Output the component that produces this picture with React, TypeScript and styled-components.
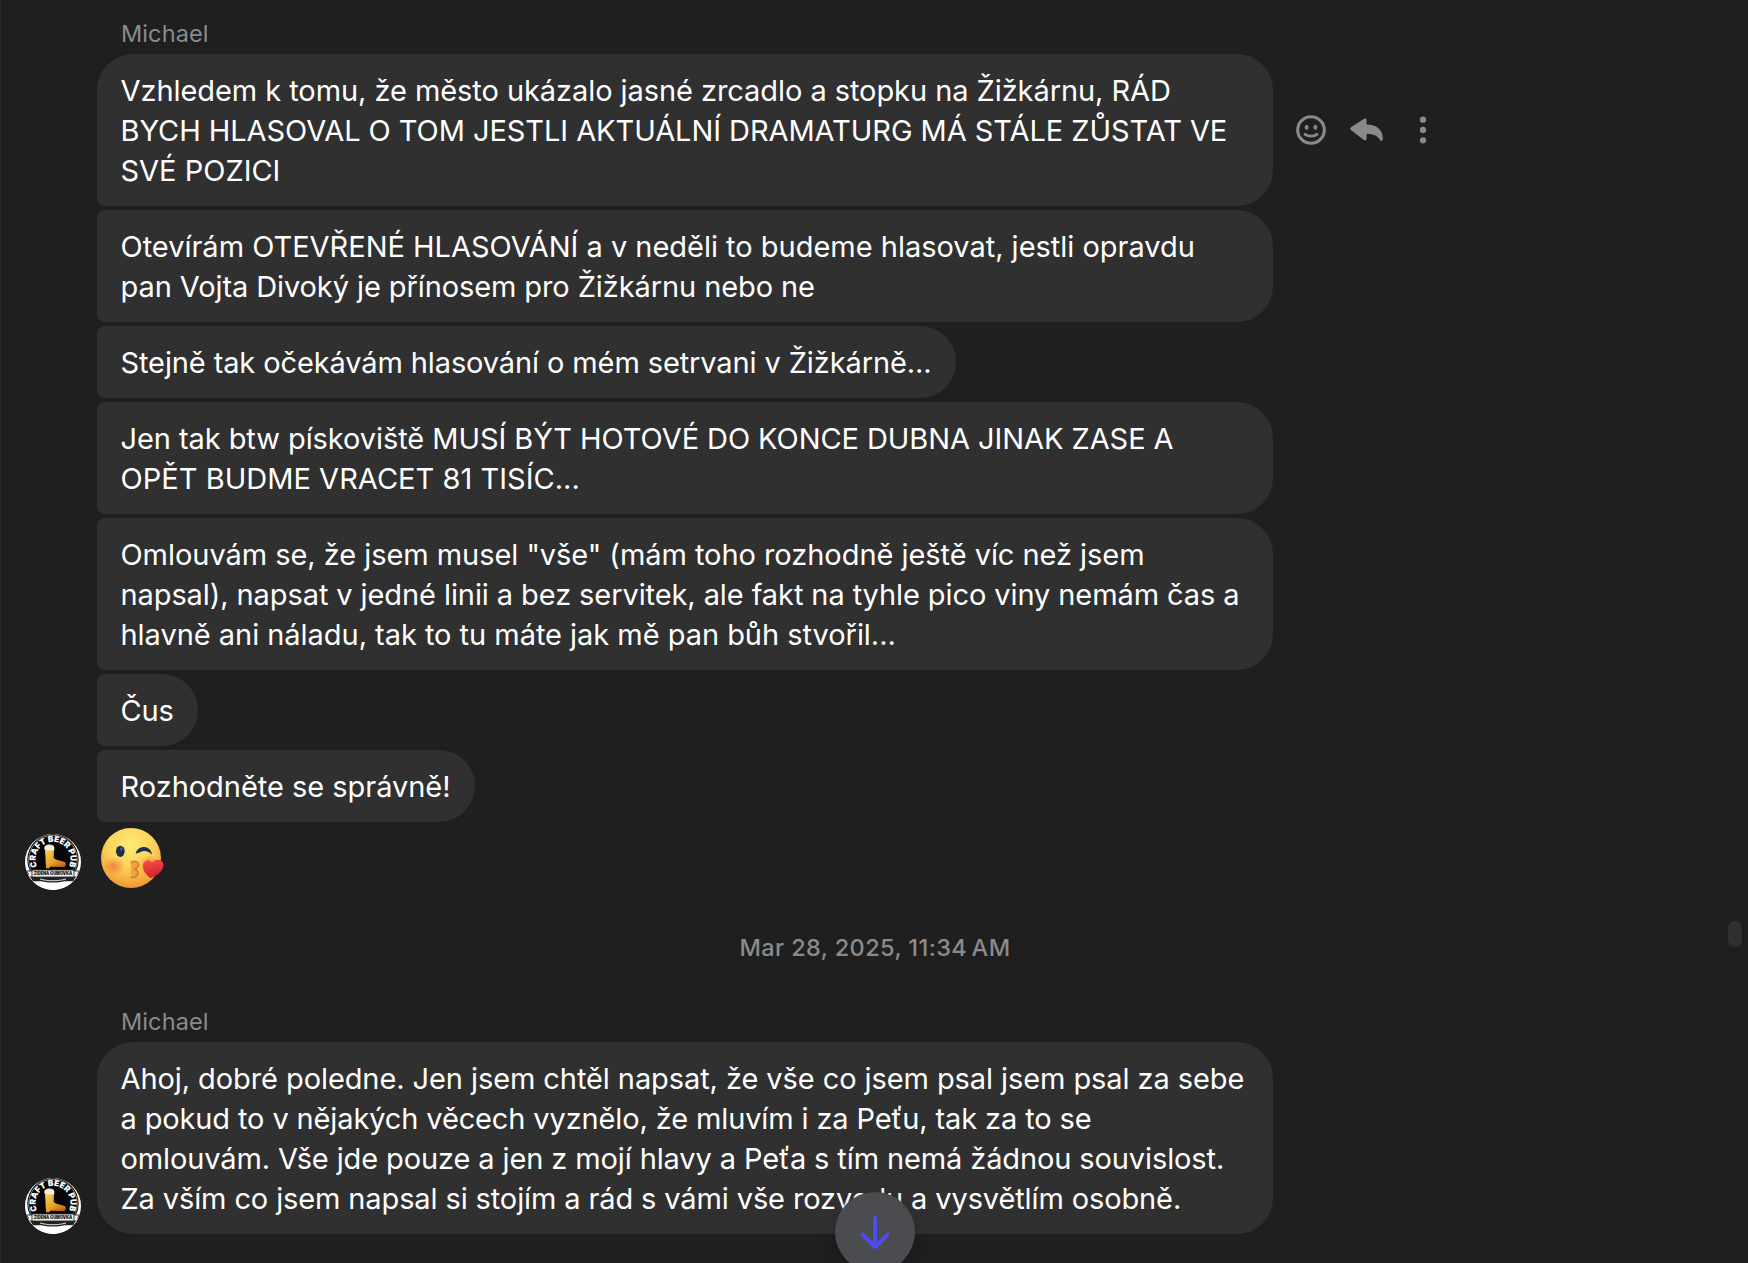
import React from 'react';
import styled, { createGlobalStyle } from 'styled-components';

const GlobalStyle = createGlobalStyle`
  * { box-sizing: border-box; }
  body { margin: 0; background: #1f1f1f; overflow: hidden; }
`;

const Screen = styled.main`
  position: relative;
  width: 1748px;
  height: 1263px;
  overflow: hidden;
  padding: 12px 24px 0;
  background: #1f1f1f;
  border-left: 1px solid #292929;
  color: #fff;
  font-family: Inter, 'Noto Sans', sans-serif;
`;

const Thread = styled.section`
  display: flex;
  flex-direction: column;
  gap: 4px;
`;

const Sender = styled.div`
  height: 38px;
  padding-left: 96px;
  font-size: 23.5px;
  line-height: 44px;
  letter-spacing: 0.1px;
  color: #8b8b8b;
`;

const MessageRow = styled.div`
  display: grid;
  grid-template-columns: 56px 1fr;
  column-gap: 16px;
  align-items: end;
`;

const Content = styled.div`
  grid-column: 2;
  display: flex;
  align-items: center;
`;

const Bubble = styled.div<{ $first?: boolean; $last?: boolean; $full?: boolean }>`
  flex: none;
  width: ${(p) => (p.$full ? '1176px' : 'auto')};
  padding: 17px 24.5px 15px 23.5px;
  border-radius: ${(p) => (p.$first ? '36px' : '8px')} 36px 36px ${(p) => (p.$last ? '36px' : '8px')};
  background: #303030;
`;

const Line = styled.div<{ $track: number }>`
  height: 40px;
  font-size: 29px;
  line-height: 40px;
  letter-spacing: ${(p) => p.$track}px;
  white-space: nowrap;
`;

const Actions = styled.div`
  display: flex;
  align-items: center;
  gap: 16px;
  margin-left: 18px;
  color: #8a8a8a;
`;

const IconButton = styled.button`
  display: flex;
  align-items: center;
  justify-content: center;
  width: 40px;
  height: 40px;
  padding: 0;
  border: 0;
  background: none;
  color: inherit;
`;

const AvatarSlot = styled.div<{ $drop?: number }>`
  grid-column: 1;
  height: 56px;
  margin-bottom: ${(p) => p.$drop ?? 0}px;
`;

const StickerSlot = styled.div`
  grid-column: 2;
  display: flex;
  height: 68px;
  padding: 2px 0 0 4px;
`;

const Timestamp = styled.div`
  width: 1700px;
  height: 106px;
  padding-top: 30px;
  text-align: center;
  font-size: 23.5px;
  font-weight: 500;
  line-height: 48px;
  letter-spacing: 0.4px;
  color: #8b8b8b;
`;

const ScrollDown = styled.button`
  position: absolute;
  left: 834px;
  top: 1192px;
  width: 80px;
  height: 80px;
  padding: 0;
  border: 0;
  border-radius: 50%;
  background: #4b4c4f;
  box-shadow: 0 4px 16px rgba(0, 0, 0, 0.2);
`;

const ScrollThumb = styled.div`
  position: absolute;
  left: 1727px;
  top: 921px;
  width: 14px;
  height: 26px;
  border-radius: 7px;
  background: #303030;
`;

type TextLine = [text: string, track: number];
interface Message {
  lines: TextLine[];
  actions?: boolean;
}

const evening: Message[] = [
  {
    actions: true,
    lines: [
      ['Vzhledem k tomu, že město ukázalo jasné zrcadlo a stopku na Žižkárnu, RÁD', -0.065],
      ['BYCH HLASOVAL O TOM JESTLI AKTUÁLNÍ DRAMATURG MÁ STÁLE ZŮSTAT VE', -0.06],
      ['SVÉ POZICI', 0],
    ],
  },
  {
    lines: [
      ['Otevírám OTEVŘENÉ HLASOVÁNÍ a v neděli to budeme hlasovat, jestli opravdu', -0.015],
      ['pan Vojta Divoký je přínosem pro Žižkárnu nebo ne', -0.095],
    ],
  },
  { lines: [['Stejně tak očekávám hlasování o mém setrvani v Žižkárně...', -0.114]] },
  {
    lines: [
      ['Jen tak btw pískoviště MUSÍ BÝT HOTOVÉ DO KONCE DUBNA JINAK ZASE A', -0.07],
      ['OPĚT BUDME VRACET 81 TISÍC...', 0.03],
    ],
  },
  {
    lines: [
      ['Omlouvám se, že jsem musel "vše" (mám toho rozhodně ještě víc než jsem', -0.05],
      ['napsal), napsat v jedné linii a bez servitek, ale fakt na tyhle pico viny nemám čas a', -0.09],
      ['hlavně ani náladu, tak to tu máte jak mě pan bůh stvořil...', -0.035],
    ],
  },
  { lines: [['Čus', -0.2]] },
  { lines: [['Rozhodněte se správně!', -0.03]] },
];

const noon: Message = {
  lines: [
    ['Ahoj, dobré poledne. Jen jsem chtěl napsat, že vše co jsem psal jsem psal za sebe', -0.085],
    ['a pokud to v nějakých věcech vyznělo, že mluvím i za Peťu, tak za to se', -0.13],
    ['omlouvám. Vše jde pouze a jen z mojí hlavy a Peťa s tím nemá žádnou souvislost.', -0.115],
    ['Za vším co jsem napsal si stojím a rád s vámi vše rozvedu a vysvětlím osobně.', -0.12],
  ],
};

function SmileIcon() {
  return (
    <svg width="30" height="30" viewBox="0 0 30 30" fill="none">
      <circle cx="15" cy="15" r="13.3" stroke="currentColor" strokeWidth="3.1" />
      <ellipse cx="10.6" cy="12.2" rx="1.9" ry="2.5" fill="currentColor" />
      <ellipse cx="19.4" cy="12.2" rx="1.9" ry="2.5" fill="currentColor" />
      <path d="M9 19.3c3.4 2.5 8.6 2.5 12 0" stroke="currentColor" strokeWidth="2.7" strokeLinecap="round" />
    </svg>
  );
}

function ReplyIcon() {
  return (
    <svg width="34" height="26" viewBox="0 0 34 26">
      <path
        d="M.9 12.9a1.7 1.7 0 0 1 0-2.6L13.8 1.900c1.4-.9 2.800-.2 2.800 1.100v4.600c9.800 0 16.200 5.200 16.200 14 0 2.900-1.800 3.100-2.900 1.200-2.500-4.300-6.800-5.700-13.300-5.700v4.700c0 1.300-1.400 2-2.800 1.100z"
        fill="currentColor"
      />
    </svg>
  );
}

function MoreIcon() {
  return (
    <svg width="8" height="28" viewBox="0 0 8 28" fill="currentColor">
      <circle cx="4" cy="3.7" r="3.15" />
      <circle cx="4" cy="14" r="3.15" />
      <circle cx="4" cy="24.3" r="3.15" />
    </svg>
  );
}

function KissEmoji() {
  return (
    <svg width="63.3" height="61.3" viewBox="273 54 190 184">
      <defs>
        <radialGradient id="face" cx="0.48" cy="0.28" r="0.75">
          <stop offset="0" stopColor="#fdea78" />
          <stop offset="0.5" stopColor="#fbd45a" />
          <stop offset="0.85" stopColor="#f4a63c" />
          <stop offset="1" stopColor="#ee8a34" />
        </radialGradient>
        <radialGradient id="blush">
          <stop offset="0" stopColor="#f4683f" stopOpacity="0.75" />
          <stop offset="1" stopColor="#f4683f" stopOpacity="0" />
        </radialGradient>
        <linearGradient id="heart" x1="0" y1="0" x2="0.3" y2="1">
          <stop offset="0" stopColor="#f4564b" />
          <stop offset="1" stopColor="#d4202f" />
        </linearGradient>
      </defs>
      <circle cx="363" cy="144" r="90" fill="url(#face)" />
      <ellipse cx="312" cy="168" rx="34" ry="27" fill="url(#blush)" />
      <circle cx="418" cy="166" r="32" fill="url(#blush)" />
      <ellipse cx="331" cy="124" rx="13" ry="17" fill="#202c50" />
      <ellipse cx="334" cy="117" rx="4" ry="5" fill="#4a5b85" />
      <path d="M377 131c3-14 17-22 30-19 11 2 18 11 19 22-7-7-14-11-22-11-10 0-17 7-27 8z" fill="#202c50" />
      <path d="M363 155c12-4 24-1 24 9 0 7-5 11-11 14 7 3 10 7 9 13-1 10-12 15-22 12z" fill="#f3a23c" />
      <path
        d="M364 156c11-4 22-1 22 8 0 6-5 10-12 14 8 2 11 6 10 12-1 9-11 14-20 12"
        fill="none"
        stroke="#d87f33"
        strokeWidth="5"
        strokeLinecap="round"
        strokeLinejoin="round"
      />
      <path d="M422 205c-12-9-24-23-23-39 1-14 18-22 27-8 10-13 31-12 34 3 4 19-19 37-38 44z" fill="url(#heart)" />
    </svg>
  );
}

function PubAvatar({ id }: { id: string }) {
  return (
    <svg width="56" height="56" viewBox="15 23 168 168">
      <defs>
        <clipPath id={`${id}-clip`}>
          <circle cx="99" cy="107" r="84" />
        </clipPath>
        <linearGradient id={`${id}-beer`} x1="0" y1="0" x2="0.7" y2="1">
          <stop offset="0" stopColor="#f7d95c" />
          <stop offset="0.6" stopColor="#eaa62c" />
          <stop offset="1" stopColor="#c76a1c" />
        </linearGradient>
        <path id={`${id}-arc`} d="M52 121A52 52 0 1 1 146 121" />
      </defs>
      <g clipPath={`url(#${id}-clip)`}>
        <rect x="15" y="23" width="168" height="168" fill="#fff" />
        <circle cx="99" cy="100" r="77" fill="#070707" />
        <circle cx="99" cy="100" r="73" fill="none" stroke="#c8c8c8" strokeWidth="2" />
        <path d="M15 152h168v39H15z" fill="#fff" />
        <path d="M30 150h138l-8 15h-26c-20 5-50 5-70 0H38z" fill="#222" />
        <path d="M60 158c26 7 52 7 78 0" fill="none" stroke="#ddd" strokeWidth="3" />
        <path d="M75 65h27l-1 30c8 7 19 8 31 11 8 3 7 12 0 15H90l-1 5H78z" fill={`url(#${id}-beer)`} />
        <path d="M73 66c-2-13 28-17 30-3v9H75z" fill="#f6efe0" />
        <path d="M96 116c12 3 26 1 40-2l-3 7H96z" fill="#c56a1f" />
        <path d="M20 134l16 0v-3h126v3h16l-5 9 5 9H20l5-9z" fill="#ededed" stroke="#2a2a2a" strokeWidth="2.5" />
        <path d="M36 131v21m126-21v21" stroke="#2a2a2a" strokeWidth="2.5" />
        <text
          x="99"
          y="147.5"
          textAnchor="middle"
          textLength="116"
          lengthAdjust="spacingAndGlyphs"
          fontFamily="Inter, sans-serif"
          fontWeight="900"
          fontSize="15"
          fill="#111"
        >
          ŽIDENÁ GUMOVKA
        </text>
        <text fontFamily="Inter, sans-serif" fontWeight="900" fontSize="25" fill="#fff">
          <textPath href={`#${id}-arc`} textLength="208" lengthAdjust="spacingAndGlyphs">
            CRAFT BEER PUB
          </textPath>
        </text>
      </g>
    </svg>
  );
}

function MessageBubble({ message, first, last }: { message: Message; first?: boolean; last?: boolean }) {
  return (
    <Bubble $first={first} $last={last} $full={message.lines.length > 1}>
      {message.lines.map(([text, track]) => (
        <Line key={text} $track={track}>
          {text}
        </Line>
      ))}
    </Bubble>
  );
}

export default function App() {
  return (
    <Screen>
      <GlobalStyle />
      <Thread>
        <Sender>Michael</Sender>
        {evening.map((message, index) => (
          <MessageRow key={message.lines[0][0]}>
            <Content>
              <MessageBubble message={message} first={index === 0} />
              {message.actions && (
                <Actions>
                  <IconButton aria-label="React">
                    <SmileIcon />
                  </IconButton>
                  <IconButton aria-label="Reply">
                    <ReplyIcon />
                  </IconButton>
                  <IconButton aria-label="More">
                    <MoreIcon />
                  </IconButton>
                </Actions>
              )}
            </Content>
          </MessageRow>
        ))}
        <MessageRow>
          <AvatarSlot $drop={4}>
            <PubAvatar id="pub-a" />
          </AvatarSlot>
          <StickerSlot>
            <KissEmoji />
          </StickerSlot>
        </MessageRow>
      </Thread>
      <Timestamp>Mar 28, 2025, 11:34{'\u202f'}AM</Timestamp>
      <Thread>
        <Sender>Michael</Sender>
        <MessageRow>
          <AvatarSlot>
            <PubAvatar id="pub-b" />
          </AvatarSlot>
          <MessageBubble message={noon} first last />
        </MessageRow>
      </Thread>
      <ScrollThumb />
      <ScrollDown aria-label="Scroll to latest">
        <svg width="80" height="80" viewBox="0 0 80 80" fill="none">
          <path
            d="M40 26v29M27.5 42.5L40 55l12.5-12.5"
            stroke="#4f4df0"
            strokeWidth="4"
            strokeLinecap="round"
            strokeLinejoin="round"
          />
        </svg>
      </ScrollDown>
    </Screen>
  );
}
